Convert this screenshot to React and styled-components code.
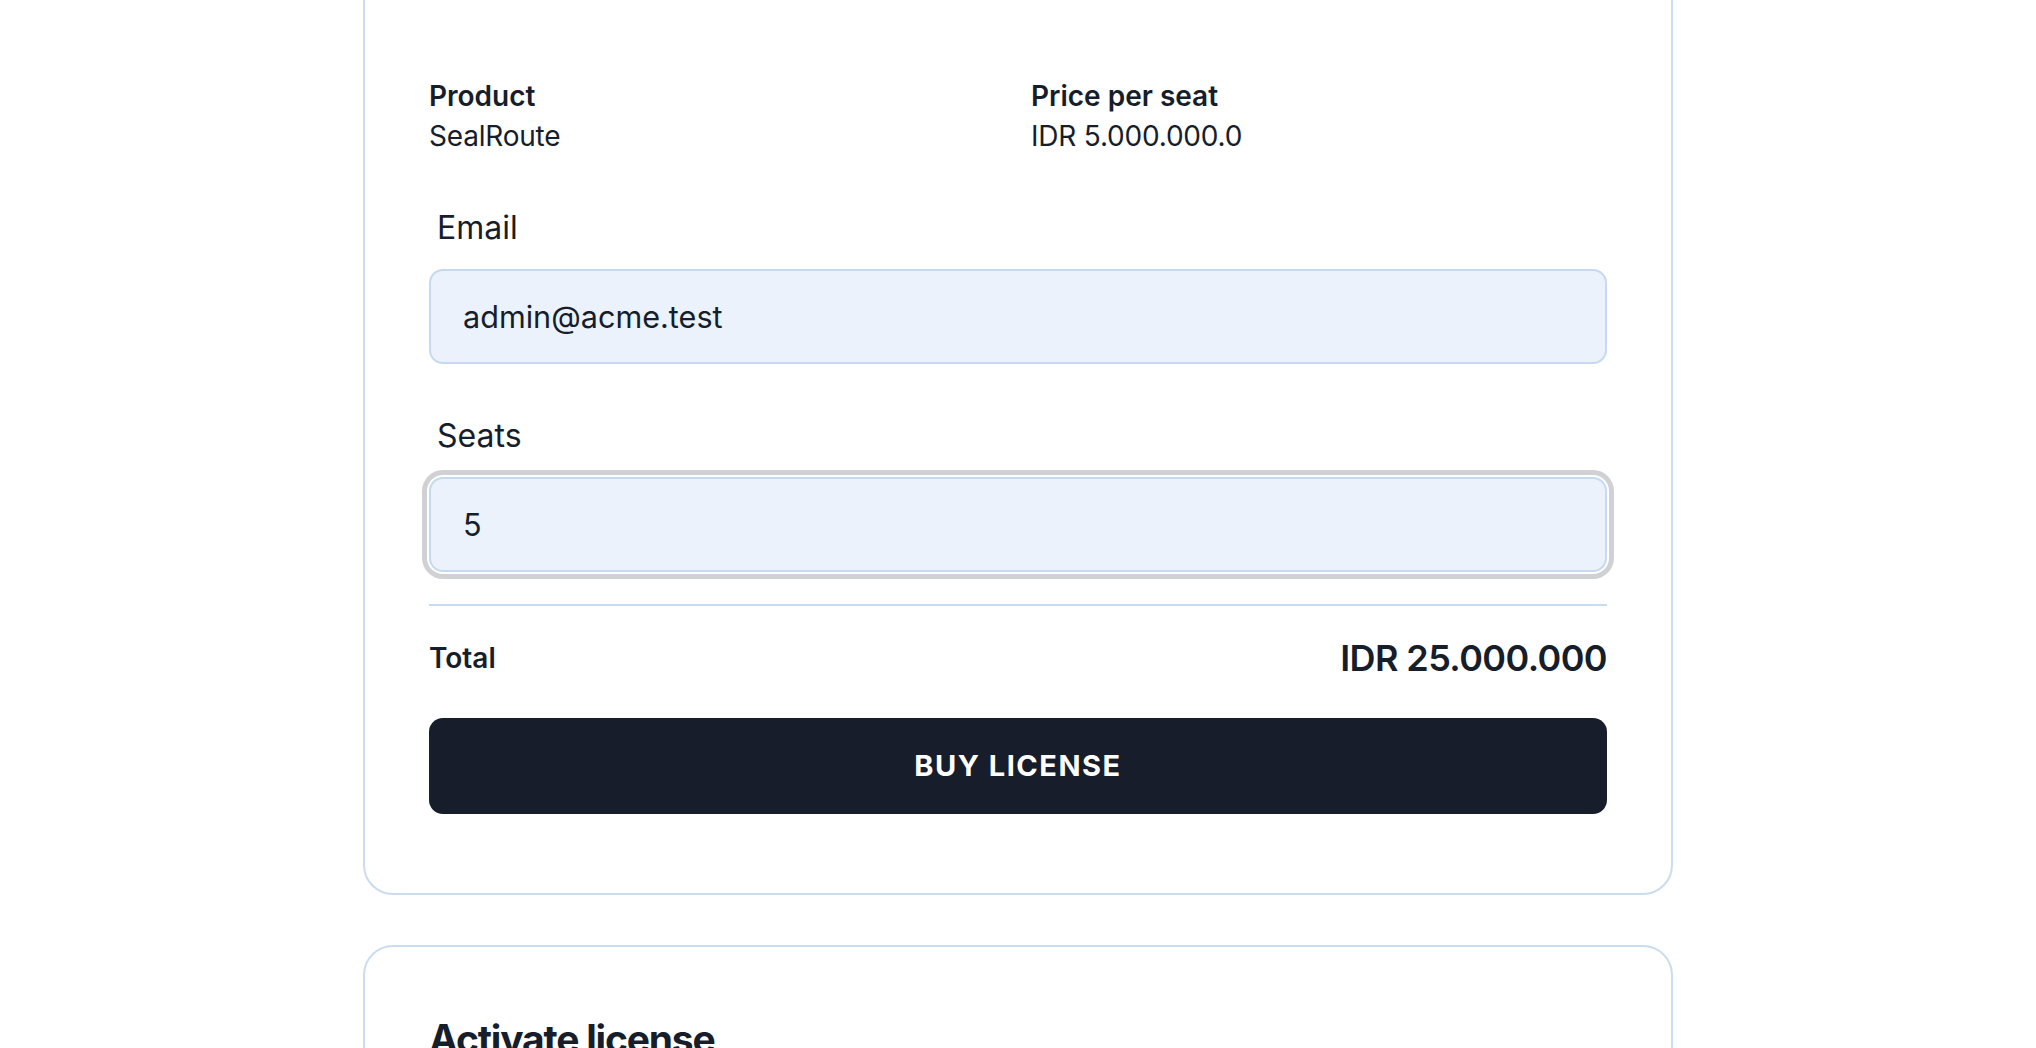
import React from "react";
import styled, { createGlobalStyle } from "styled-components";

const GlobalStyle = createGlobalStyle`
  html, body {
    margin: 0;
    padding: 0;
    background: #ffffff;
  }
  body {
    font-family: Inter, "Noto Sans", "Liberation Sans", sans-serif;
    color: #161d2b;
    overflow: hidden;
  }
  * { box-sizing: border-box; }
`;

const Page = styled.main`
  width: 1310px;
  margin: -40px auto 0;
  display: flex;
  flex-direction: column;
  gap: 50px;
`;

const Card = styled.section`
  background: #ffffff;
  border: 2px solid #cbdcf1;
  border-radius: 30px;
  padding: ${(p) => p.$padding || "64px"};
  display: flex;
  flex-direction: column;
`;

const SummaryGrid = styled.div`
  display: grid;
  grid-template-columns: 1fr 1fr;
  column-gap: 26px;
`;

const Info = styled.div`
  display: flex;
  flex-direction: column;
`;

const InfoLabel = styled.span`
  font-size: 28px;
  line-height: 40px;
  font-weight: 600;
`;

const InfoValue = styled.span`
  font-size: 28px;
  line-height: 40px;
  font-weight: 400;
  letter-spacing: -0.2px;
`;

const Field = styled.label`
  display: flex;
  flex-direction: column;
  margin-top: 48px;
`;

const FieldLabel = styled.span`
  font-size: 32px;
  line-height: 48px;
  padding-left: 8px;
  margin-bottom: 17px;
`;

const Input = styled.input`
  height: 95px;
  width: 100%;
  border: 2px solid #c6d9f0;
  border-radius: 14px;
  background: #ebf2fb;
  padding: 0 32px;
  font-family: inherit;
  font-size: 30.6px;
  color: #161d2b;
  outline: none;
  box-shadow: ${(p) =>
    p.$focused ? "0 0 0 2px #ffffff, 0 0 0 7px #d0d1d5" : "none"};
`;

const Divider = styled.hr`
  border: none;
  height: 2px;
  background: #c9dbef;
  margin: 32px 0 0;
`;

const TotalRow = styled.div`
  display: flex;
  align-items: center;
  justify-content: space-between;
  margin-top: 28px;
  height: 48px;
`;

const TotalLabel = styled.span`
  font-size: 28px;
  font-weight: 600;
`;

const TotalAmount = styled.span`
  font-size: 36px;
  font-weight: 600;
  letter-spacing: -0.6px;
`;

const BuyButton = styled.button`
  margin-top: 36px;
  height: 96px;
  width: 100%;
  border: none;
  border-radius: 14px;
  background: #171d2a;
  color: #ffffff;
  font-family: inherit;
  font-size: 29px;
  font-weight: 700;
  letter-spacing: 1.5px;
  cursor: pointer;
  padding: 0 0 2px;
`;

const CardTitle = styled.h2`
  margin: 0;
  font-size: 39px;
  line-height: 56px;
  font-weight: 700;
  letter-spacing: -1.2px;
`;

const CardText = styled.p`
  margin: 16px 0 0;
  font-size: 28px;
  line-height: 40px;
`;

export default function App() {
  return (
    <>
      <GlobalStyle />
      <Page>
        <Card $padding="114px 64px 79px">
          <SummaryGrid>
            <Info>
              <InfoLabel>Product</InfoLabel>
              <InfoValue>SealRoute</InfoValue>
            </Info>
            <Info>
              <InfoLabel>Price per seat</InfoLabel>
              <InfoValue>IDR 5.000.000.0</InfoValue>
            </Info>
          </SummaryGrid>
          <Field>
            <FieldLabel>Email</FieldLabel>
            <Input type="email" defaultValue="admin@acme.test" />
          </Field>
          <Field>
            <FieldLabel>Seats</FieldLabel>
            <Input type="text" defaultValue="5" $focused />
          </Field>
          <Divider />
          <TotalRow>
            <TotalLabel>Total</TotalLabel>
            <TotalAmount>IDR 25.000.000</TotalAmount>
          </TotalRow>
          <BuyButton type="button">BUY LICENSE</BuyButton>
        </Card>
        <Card>
          <CardTitle>Activate license</CardTitle>
          <CardText>Enter your license key to activate SealRoute.</CardText>
        </Card>
      </Page>
    </>
  );
}
